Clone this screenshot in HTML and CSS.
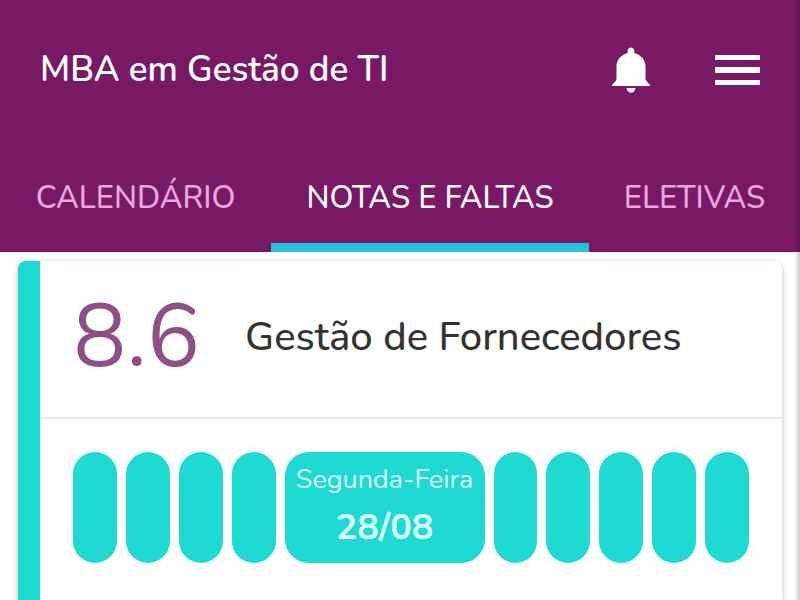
FILE: index.html
```html
<!DOCTYPE html>
<html lang="pt-BR">
<head>
    <meta charset="UTF-8">
    <meta name="viewport" content="width=device-width, initial-scale=1.0">
    <title>Notas e Faltas</title>
    <link rel="stylesheet" href="styles.css">
</head>
<body>
    <header class="header">
        <div class="topbar">
            <h1>MBA em Gestão de TI</h1>
            <button class="icon-btn" type="button" aria-label="Notificações">
                <svg width="40" height="48" viewBox="0 0 40 48" fill="#fff">
                    <path d="M20 1.500c-1.900 0-3.300 1.500-3.300 3.300v2.100C10.500 8.500 5.500 13.500 5.500 20v12.500c0 2.200-1.500 3.200-4.500 6.300V40h38v-1.200c-3-3.100-4.500-4.100-4.500-6.300V20c0-6.500-5-11.500-11.200-13.100V4.800c0-1.800-1.400-3.300-3.300-3.300z"/>
                    <path d="M15.500 42h9c-.5 3-2.200 4.700-4.500 4.700s-4-1.700-4.500-4.700z"/>
                </svg>
            </button>
            <button class="icon-btn" type="button" aria-label="Menu">
                <svg width="45" height="30" viewBox="0 0 45 30" fill="#fff">
                    <path d="M0 0h45v5H0zM0 12h45v6H0zM0 25h45v5H0z"/>
                </svg>
            </button>
        </div>
        <nav class="tabs">
            <a href="#calendario">CALENDÁRIO</a>
            <a href="#notas" class="active">NOTAS E FALTAS</a>
            <a href="#eletivas">ELETIVAS</a>
        </nav>
    </header>
    <main>
        <section class="card">
            <div class="card-header">
                <span class="grade">8.6</span>
                <h2>Gestão de Fornecedores</h2>
            </div>
            <div class="days">
                <button class="day" type="button" aria-label="Aula 1"></button>
                <button class="day" type="button" aria-label="Aula 2"></button>
                <button class="day" type="button" aria-label="Aula 3"></button>
                <button class="day" type="button" aria-label="Aula 4"></button>
                <button class="day open" type="button">
                    <span class="weekday">Segunda-Feira</span>
                    <strong class="date">28/08</strong>
                </button>
                <button class="day" type="button" aria-label="Aula 6"></button>
                <button class="day" type="button" aria-label="Aula 7"></button>
                <button class="day" type="button" aria-label="Aula 8"></button>
                <button class="day" type="button" aria-label="Aula 9"></button>
                <button class="day" type="button" aria-label="Aula 10"></button>
            </div>
        </section>
    </main>
</body>
</html>
```

FILE: styles.css
```css
* {
    box-sizing: border-box;
}

body {
    font-family: Nunito, Lato, sans-serif;
    background-color: #fff;
    display: flex;
    flex-direction: column;
    min-height: 100vh;
    margin: 0;
    position: relative;
}

/* soft shade along the right edge */
body::after {
    content: "";
    position: absolute;
    top: 0;
    right: 0;
    bottom: 0;
    width: 6px;
    background: linear-gradient(to right, rgba(0, 0, 0, 0), rgba(0, 0, 0, 0.2));
    pointer-events: none;
}

h1, h2 {
    margin: 0;
}

button {
    border: none;
    padding: 0;
    font-family: inherit;
    cursor: pointer;
}

.header {
    background-color: #791966;
    color: #fff;
}

.topbar {
    display: flex;
    align-items: center;
    height: 140px;
    padding: 0 40px;
    gap: 64px;
}

.topbar h1 {
    flex: 1;
    font-size: 35px;
    font-weight: 600;
    line-height: 48px;
}

.icon-btn {
    background: none;
    display: flex;
}

.tabs {
    display: grid;
    grid-template-columns: 271fr 318fr 211fr;
}

.tabs a {
    height: 112px;
    padding-top: 37px;
    border-bottom: 9px solid transparent;
    color: #e9a9dc;
    font-size: 31px;
    font-weight: 500;
    line-height: 42px;
    text-align: center;
    text-decoration: none;
    white-space: nowrap;
}

.tabs a.active {
    color: #fff;
    border-bottom-color: #28c1da;
}

main {
    flex: 1;
    display: flex;
    padding: 9px 18px 0;
}

.card {
    flex: 1;
    border-left: 22px solid #1fdad2;
    border-radius: 8px 8px 0 0;
    box-shadow: 0 2px 6px rgba(0, 0, 0, 0.25);
}

.card-header {
    display: flex;
    align-items: center;
    height: 158px;
    padding: 0 33px 4px;
    gap: 45px;
    border-bottom: 2px solid #ebebeb;
}

.grade {
    color: #8f4e86;
    font-size: 89px;
    line-height: 100px;
}

.card-header h2 {
    color: #333;
    font-size: 40px;
    font-weight: 500;
    line-height: 50px;
}

.days {
    display: flex;
    gap: 9px;
    padding: 33px;
}

.day {
    flex: 1;
    height: 111px;
    background-color: #1fdad2;
    border-radius: 24px;
    color: #dcffff;
}

.day.open {
    flex: 0 0 200px;
    display: flex;
    flex-direction: column;
    align-items: center;
    justify-content: center;
    gap: 8px;
    padding-bottom: 4px;
}

.weekday {
    font-size: 27px;
    line-height: 36px;
}

.date {
    font-size: 36px;
    line-height: 44px;
}
```
